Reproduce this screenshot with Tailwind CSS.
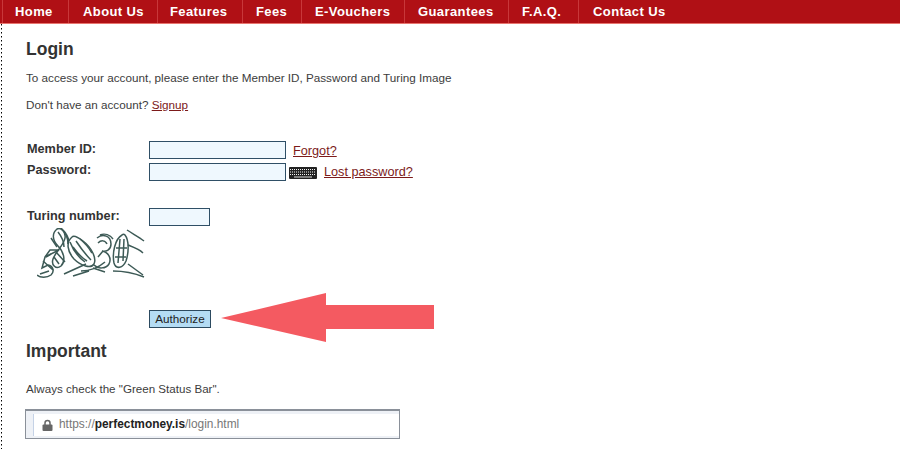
<!DOCTYPE html>
<html lang="en">
<head>
  <meta charset="UTF-8">
  <title>Login</title>
  <script src="https://cdn.jsdelivr.net/npm/@tailwindcss/browser@4"></script>
</head>
<body class="bg-white text-[#3c3c3c] font-['Liberation_Sans',Arial,sans-serif] h-[449px] overflow-hidden relative">
  <!-- Nav -->
  <nav class="h-6 bg-[#b01015] border-b border-[#e8756f] flex pl-[2px] text-white text-[13px] font-bold tracking-[0.4px] leading-[23px]">
    <a class="border-x border-[#c8383a] w-[67px] pl-[12px]">Home</a>
    <a class="border-r border-[#c8383a] w-[89px] pl-[14px]">About Us</a>
    <a class="border-r border-[#c8383a] w-[85px] pl-[12px]">Features</a>
    <a class="border-r border-[#c8383a] w-[59px] pl-[13px]">Fees</a>
    <a class="border-r border-[#c8383a] w-[103px] pl-[13px]">E-Vouchers</a>
    <a class="border-r border-[#c8383a] w-[104px] pl-[13px]">Guarantees</a>
    <a class="border-r border-[#c8383a] w-[70px] pl-[13px]">F.A.Q.</a>
    <a class="pl-[14px]">Contact Us</a>
  </nav>

  <div class="flex h-[425px]">
    <!-- Dotted rule down the left edge -->
    <svg class="shrink-0 ml-px" width="1" height="425">
      <line x1="0.5" y1="0" x2="0.5" y2="425" stroke="#000" stroke-width="1" stroke-dasharray="1.5 2.5"/>
    </svg>

    <main class="pl-[24px]">
      <h1 class="text-[17.5px] leading-5 font-bold mt-[15px] text-[#333]">Login</h1>
      <p class="text-[11.7px] leading-4 mt-[11px]">To access your account, please enter the Member ID, Password and Turing Image</p>
      <p class="text-[11.7px] leading-4 mt-[11px]">Don't have an account? <a class="underline text-[#7c1a1a]">Signup</a></p>

      <!-- Form -->
      <form class="mt-[28px] pl-px text-[12.7px]">
        <div class="flex h-[22px]">
          <label class="w-[122px] font-bold text-[#333] leading-4">Member ID:</label>
          <input class="w-[137px] h-[18px] bg-[#eff8fe] border border-[#2f4f66]">
          <a class="ml-[7px] underline text-[#7c1a1a] leading-5">Forgot?</a>
        </div>
        <div class="flex h-[45px]">
          <label class="w-[122px] font-bold text-[#333] leading-4 -mt-px">Password:</label>
          <input class="w-[137px] h-[18px] bg-[#eff8fe] border border-[#2f4f66]">
          <svg class="ml-[3px] mt-[4px]" width="28" height="12" viewBox="0 0 28 12">
            <rect width="28" height="12" rx="1" fill="#222"/>
            <path d="M1 2.5h26M1 5h26M1 7.5h26" stroke="#f4f4f4" stroke-width="1" stroke-dasharray="1 1"/>
            <path d="M5 10h18" stroke="#ddd" stroke-width="1"/>
          </svg>
          <a class="ml-[7px] underline text-[#7c1a1a] leading-[19px]">Lost password?</a>
        </div>
        <div class="flex h-[20px]">
          <label class="w-[122px] font-bold text-[#333] leading-4">Turing number:</label>
          <input class="w-[61px] h-[18px] bg-[#eff8fe] border border-[#2f4f66]">
        </div>
        <!-- Captcha -->
        <svg class="ml-[10px]" width="108" height="52" viewBox="0 0 108 52" fill="none" stroke="#3d5a56" stroke-width="1.5">
          <path d="M0 47c3 3 10 3 14 0 4-4 2-9-3-10l-6 3 3-11 14-7-9 0-5 7"/>
          <path d="M6 33l10 9M9 29l5-3M3 46l9-3"/>
          <path d="M20 1c-5 4-5 11 1 17 6 6 8 15 3 20-5 4-10-1-8-7 3-8 11-14 12-21 1-6-4-11-8-9z"/>
          <path d="M24 0c4 4 7 9 7 16M21 4c4 5 6 10 6 15M14 10l6 9M19 24l9 10M17 29l5 7M26 2c3 3 5 7 6 11"/>
          <path d="M35 9c-6 5-5 14 2 22 7 7 17 10 20 5 3-6-3-17-11-23-4-3-9-6-11-4z"/>
          <path d="M39 13c4 6 9 13 15 19M36 19c5 7 9 11 14 14M43 11c5 4 9 9 12 14M33 14c3 8 8 15 15 20"/>
          <path d="M60 10c6-5 14-2 14 6 0 6-5 8-9 7 6 1 10 7 7 13-3 5-11 5-15 1M61 15c3-3 7-3 9 1M66 23l-5 6M63 7c5-2 10 0 13 4"/>
          <path d="M44 43c9 0 17-3 24-9M27 46l22-10M36 48l16-5M56 40l12 4"/>
          <path d="M85 7c-7 4-10 18-8 28 2 7 9 5 12-2 3-9 3-21-1-26-1-1-2-1-3 0z"/>
          <path d="M83 11l-2 24M87 11l-1 22M79 20h11M78 29h11"/>
          <path d="M90 2c6 4 12 7 17 11M91 17c5 2 11 4 15 8M76 43c11 0 21 2 31 6M91 36l15 11"/>
        </svg>
        <button type="button" class="block ml-[122px] mt-[30px] w-[62px] h-[18px] bg-[#b4dcf4] border border-[#2c4a60] text-[11.7px] leading-4 text-[#222]">Authorize</button>
      </form>

      <h2 class="text-[17.5px] leading-5 font-bold mt-[13px] text-[#333]">Important</h2>
      <p class="text-[11.6px] leading-4 mt-[20px]">Always check the "Green Status Bar".</p>

      <!-- Status bar image -->
      <div class="mt-[12px] -ml-px w-[375px] h-[30px] bg-[#eef1f6] border border-[#8a9099] border-t-2 pl-[7px] pt-[3px]">
        <div class="h-[22px] bg-white border-l border-[#c5d2e6] flex items-center pl-[8px] text-[11.9px] text-[#777]">
          <svg class="mr-[6px]" width="11" height="12" viewBox="0 0 11 12">
            <path d="M3 6V4a2.5 2.5 0 0 1 5 0v2" fill="none" stroke="#666" stroke-width="1.5"/>
            <rect x="0.5" y="5.5" width="10" height="6.5" rx="1" fill="#666"/>
          </svg>
          <span>https://<b class="text-[#222]">perfectmoney.is</b>/login.html</span>
        </div>
      </div>
    </main>
  </div>

  <!-- Red arrow annotation -->
  <svg class="absolute left-0 top-0 pointer-events-none" width="900" height="449">
    <polygon points="221,318 326,293 326,305 434,305 434,329 326,329 326,342" fill="#f45a61"/>
  </svg>
</body>
</html>
